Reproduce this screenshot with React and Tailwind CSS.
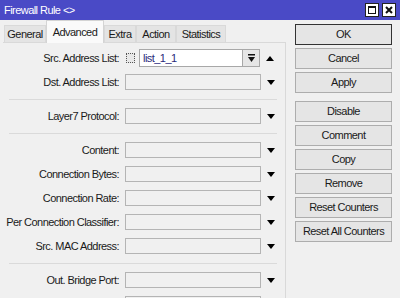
import React from 'react';

const Down = () => (
    <svg width="8" height="5" viewBox="0 0 8 5" className="shrink-0">
        <polygon points="0,0 8,0 4,5" fill="#000" />
    </svg>
);

const Up = () => (
    <svg width="8" height="5" viewBox="0 0 8 5" className="shrink-0">
        <polygon points="0,5 8,5 4,0" fill="#000" />
    </svg>
);

const Field = ({ label }) => (
    <div className="flex items-center h-[24px]">
        <div className="w-[117px] text-right pr-[1px] whitespace-nowrap">{label}</div>
        <div className="ml-[5px] w-[136px] h-[16px] border border-[#b4b4b4] bg-[#f0f0f0]"></div>
        <div className="ml-[6px]"><Down /></div>
    </div>
);

const Sep = () => (
    <div className="h-[10px] flex items-center pl-[6px] pr-[8px]">
        <div className="w-full h-px bg-[#dadada]"></div>
    </div>
);

const Btn = ({ children, main, className = '' }) => (
    <div className={`h-[21px] flex items-center justify-center bg-[#e5e5e5] border ${main ? 'border-[#333]' : 'border-[#adadad]'} ${className}`}>
        {children}
    </div>
);

export default function App() {
    const tabs = [
        { label: 'General', w: 'w-[42px]' },
        { label: 'Advanced', w: 'w-[58px]', active: true },
        { label: 'Extra', w: 'w-[32px]' },
        { label: 'Action', w: 'w-[40px]' },
        { label: 'Statistics', w: 'w-[50px]' },
    ];

    return (
        <div className="w-[400px] h-[298px] bg-[#f0f0f0] overflow-hidden flex flex-col text-[11px] tracking-[-0.55px] text-[#1a1a1a]" style={{ fontFamily: '"Liberation Sans", Arial, sans-serif' }}>
            {/* Title bar */}
            <div className="h-[20px] bg-[#4a4ac6] flex items-center justify-between pl-[4px] pr-[4px] shrink-0">
                <span className="text-white text-[11px]">Firewall Rule &lt;&gt;</span>
                <div className="flex gap-[3px] items-center">
                    <div className="w-[14px] h-[14px] bg-white border border-[#222] flex items-center justify-center">
                        <div className="w-[8px] h-[8px] border border-[#111] border-t-2"></div>
                    </div>
                    <div className="w-[14px] h-[14px] bg-white border border-[#222] flex items-center justify-center">
                        <svg width="8" height="8" viewBox="0 0 8 8">
                            <path d="M1 1 L7 7 M7 1 L1 7" stroke="#111" strokeWidth="2" />
                        </svg>
                    </div>
                </div>
            </div>

            <div className="flex flex-1">
                {/* Left tab panel */}
                <div className="w-[283px] ml-[3px] flex flex-col">
                    <div className="h-[22px] flex items-end pl-[1px] relative z-10">
                        {tabs.map((t) => (
                            <div
                                key={t.label}
                                className={`${t.w} flex items-center justify-center border border-b-0 ${t.active ? 'h-[23px] -mb-px bg-[#fafafa] border-[#d4d4d4]' : 'h-[17px] bg-[#e4e4e4] border-[#d9d9d9]'}`}
                            >
                                {t.label}
                            </div>
                        ))}
                    </div>
                    <div className="flex-1 border-t border-r border-[#d9d9d9] pt-[3px]">
                        {/* Src. Address List */}
                        <div className="flex items-center h-[24px]">
                            <div className="w-[117px] text-right pr-[1px] whitespace-nowrap">Src. Address List:</div>
                            <div className="ml-[6px] w-[9px] h-[10px] border border-dotted border-[#555] bg-[#e8e8e8]"></div>
                            <div className="ml-[4px] w-[104px] h-[18px] bg-white border border-[#a8a8a8] flex items-center pl-[3px] text-[#2a2a7a]">list_1_1</div>
                            <div className="w-[17px] h-[18px] bg-[#e6e6e6] border border-l-0 border-[#a8a8a8] flex items-center justify-center">
                                <svg width="7" height="8" viewBox="0 0 7 8">
                                    <rect x="0" y="0" width="7" height="1.5" fill="#111" />
                                    <polygon points="0,3 7,3 3.5,8" fill="#111" />
                                </svg>
                            </div>
                            <div className="ml-[6px]"><Up /></div>
                        </div>
                        <Field label="Dst. Address List:" />
                        <Sep />
                        <Field label="Layer7 Protocol:" />
                        <Sep />
                        <Field label="Content:" />
                        <Field label="Connection Bytes:" />
                        <Field label="Connection Rate:" />
                        <Field label="Per Connection Classifier:" />
                        <Field label="Src. MAC Address:" />
                        <Sep />
                        <Field label="Out. Bridge Port:" />
                        <Field label="" />
                    </div>
                </div>

                {/* Right button column */}
                <div className="ml-[9px] w-[97px] pt-[4px] flex flex-col gap-[3px]">
                    <Btn main>OK</Btn>
                    <Btn>Cancel</Btn>
                    <Btn>Apply</Btn>
                    <Btn className="mt-[5px]">Disable</Btn>
                    <Btn>Comment</Btn>
                    <Btn>Copy</Btn>
                    <Btn>Remove</Btn>
                    <Btn>Reset Counters</Btn>
                    <Btn>Reset All Counters</Btn>
                </div>
            </div>
        </div>
    );
}
